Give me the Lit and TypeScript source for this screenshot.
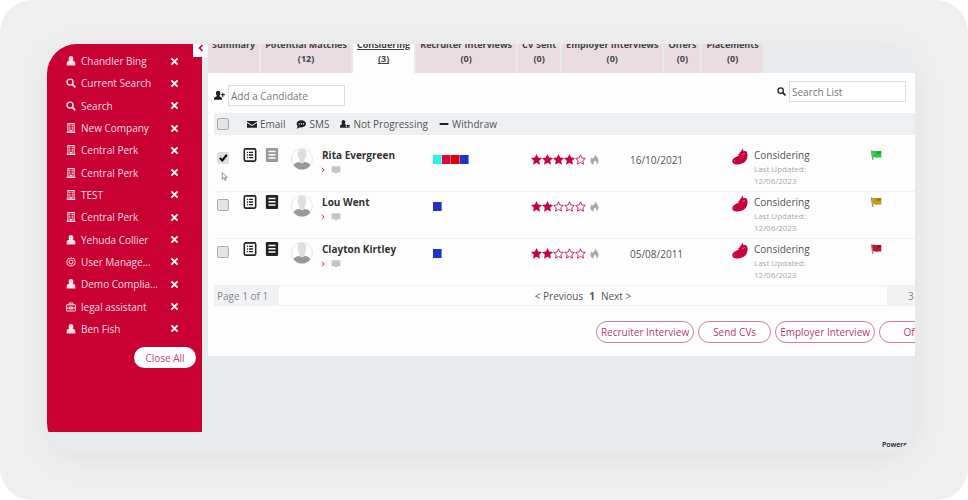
import { LitElement, html, svg, css, nothing } from "lit";
import { customElement, property } from "lit/decorators.js";

const shapes: Record<string, unknown> = {
  user: svg`<path fill="currentColor" d="M8 0c2.600 0 3.800 1.900 3.800 4.200 0 1.400-.4 2.500-1 3.300 2.700.3 4.200 1.700 4.200 4.600V15H1v-2.900c0-2.900 1.500-4.300 4.200-4.600-.6-.8-1-1.900-1-3.300C4.200 1.900 5.400 0 8 0z"/>`,
  search: svg`<g fill="none" stroke="currentColor" stroke-width="2.200"><circle cx="6.500" cy="6.500" r="4.800"/><path stroke-width="3" d="M10 10l5 5"/></g>`,
  building: svg`<g fill="none" stroke="currentColor"><path stroke-width="1.700" d="M3 15V1h10v14M1 15h14M6.500 15v-3h3v3"/><path stroke-width="1.700" d="M5 4h2m2 0h2M5 6.700h2m2 0h2M5 9.400h2m2 0h2"/></g>`,
  gear: svg`<g fill="none" stroke="currentColor" stroke-width="1.500"><path d="M8 1l2 1.500 2.600-.1.600 2.500L15 7.200 14 9.500l.2 2.500-2.500.7L10 14.600l-2-.8-2 .8-1.700-1.900-2.500-.7.2-2.500-1-2.300 1.800-2.300.6-2.500 2.600.1z"/><circle cx="8" cy="8" r="3.200"/></g>`,
  briefcase: svg`<g fill="none" stroke="currentColor" stroke-width="1.700"><rect x="1" y="4.500" width="14" height="10" rx="1.500"/><path d="M4.500 4.500l1-3h5l1 3M1 9.500h5m4 0h5M6 8h4v3H6z"/></g>`,
  userPlus: svg`<path fill="currentColor" d="M6 1c2.300 0 3.200 1.600 3.200 3.600 0 1.600-.6 2.900-1.400 3.700.1 1.500 4 1.600 4 4.200V14H0v-1.500c0-2.600 4-2.700 4.200-4.200C3.400 7.500 2.800 6.200 2.800 4.600 2.800 2.600 3.700 1 6 1zM12 4h1.600v2.200H16v1.600h-2.400V10H12V7.800H9.800V6.200H12z"/>`,
  userMinus: svg`<path fill="currentColor" d="M5.500 1.500C7.500 1.500 8.600 3 8.600 5c0 1.300-.5 2.400-1.200 3.100 1.300.4 2.300.9 2.900 1.700L9 11.200 11 13l-1 1H0v-1.600c0-2.500 1.500-3.600 3.600-4.300C2.900 7.400 2.400 6.300 2.400 5c0-2 1.100-3.500 3.100-3.500z"/><path fill="none" stroke="currentColor" stroke-width="2" d="M11 9.500l4.300 4.300m0-4.300L11 13.800"/>`,
  mail: svg`<path fill="currentColor" d="M0 3h16v1.500L8 9.500 0 4.500zM0 6.200l8 5 8-5V14H0z"/>`,
  sms: svg`<path fill="currentColor" fill-rule="evenodd" d="M8.500 2C12.700 2 16 4.500 16 7.700s-3.300 5.700-7.500 5.700c-1 0-2-.1-2.800-.4C4.500 14.200 2.800 15 1 15c.9-1 1.500-2 1.600-3.400C1.600 10.600 1 9.200 1 7.700 1 4.500 4.300 2 8.500 2zM4.300 6.800v1.800h1.800V6.800zm3.300 0v1.800h1.800V6.800zm3.300 0v1.800h1.800V6.800z"/>`,
  minus: svg`<path fill="currentColor" d="M1 6.500h14v3H1z"/>`,
  cross: svg`<path fill="none" stroke="currentColor" stroke-width="3.400" d="M2.500 2.500l11 11m0-11l-11 11"/>`,
  chevron: svg`<path fill="none" stroke="currentColor" stroke-width="3.400" d="M11 2L5 8l6 6"/>`,
  arrow: svg`<path fill="none" stroke="currentColor" stroke-width="2.200" d="M5 2l6 6-6 6"/>`,
  doc: svg`<rect x="1.500" y="1" width="13" height="14" rx="1.500" fill="none" stroke="currentColor" stroke-width="1.800"/><path fill="none" stroke="currentColor" stroke-width="1.500" d="M4.500 5h1.200m1 0h4.800M4.500 8h1.200m1 0h4.800M4.500 11h1.200m1 0h4.800"/>`,
  list: svg`<rect x="1" y="0" width="14" height="16" rx="1.500" fill="currentColor"/><path fill="none" stroke="#fff" stroke-width="1.500" d="M4 4h8M4 7.700h8M4 11.400h8"/>`,
  comment: svg`<path fill="currentColor" d="M1 2h14v9.500h-4.500L8 14l-2.500-2.500H1z"/>`,
  flame: svg`<path fill="currentColor" d="M9 0c.4 3 4.800 5 4.800 9.800 0 2.600-1.200 4.600-2.800 5.700.6-2.500-.4-4.700-2.600-6-.2 1.700-2.600 3-1.800 6C3.800 14.600 2 12.500 2 9.800 2 7.400 3.400 6 4.200 4.600c.6.9.9 1.600 1 2.600C7.400 5.700 9 3 9 0z"/>`,
  star: svg`<path fill="currentColor" d="M8 0l2.400 5.200 5.600.7-4.100 3.900 1.200 5.900L8 12.900l-5.100 2.800 1.200-5.900L0 5.900l5.600-.7z"/>`,
  starEmpty: svg`<path fill="none" stroke="currentColor" stroke-width="1.200" d="M8 1.200l2 4.600 5 .6-3.700 3.400 1.100 5L8 12.300l-4.400 2.500 1.100-5L1 6.400l5-.6z"/>`,
  bean: svg`<path fill="currentColor" d="M10 0c1 .9 1.400 1.700 1.400 2.700 1.500-.6 2.900-.3 3.500.8 1.100 2.500.8 6.300-1 8.700-2.200 2.800-6.200 4-9.900 3.700C1.500 15.700 0 14.300.3 12.300c.3-1.900 2-3.200 4-4.100 1.600-.7 2.500-1 3.200-1.600L5.800 6.400c.6-.8 1.500-1.400 2.700-1.900L7.300 4.100C9 3.400 10 2 10 0z"/><path fill="none" stroke="#fff" stroke-opacity=".5" stroke-width=".9" d="M1.800 12.800l1-.6M10.500 6c1.200-.2 1.800-.7 2.200-1.500"/>`,
  avatar: svg`<circle cx="8" cy="8" r="7.600" fill="#fff" stroke="#dcdcdc" stroke-width=".5"/><path fill="#999" d="M1.800 12.600C2.600 10.800 4.800 10 8 10s5.400.8 6.200 2.600A7.700 7.700 0 0 1 8 15.700a7.700 7.700 0 0 1-6.200-3.100z"/><path fill="#dedede" d="M8 .6c2.100 0 3.200 1.500 3.200 3.800 0 1.700-.5 3-1.300 3.800v2C9.400 11.500 6.600 11.500 6.100 10.200v-2C5.300 7.400 4.800 6.100 4.800 4.400 4.800 2.100 5.900.6 8 .6z"/>`,
  flag: svg`<path fill="#8d8d8d" d="M1 2l1.500-.5L4.500 14.500l-1.500.3z"/><path fill="currentColor" d="M2.500 2.500c3-1 5 .6 8 .3 1.500-.2 3-.2 4.500 0V11.500c-2-.5-3.500 0-5 .2-2.500.3-4-1.500-6-.6z"/><path fill="#000" fill-opacity=".2" d="M9 3c2-.3 4-.4 6-.2V6.500c-2-.4-4 .2-6 .2z"/>`,
  pointer: svg`<path fill="#fff" stroke="#777" stroke-width="1.400" d="M4 1v12l3-2.800L9 15l2-1-2-4.300h4z"/>`,
};

@customElement("ui-icon")
class UiIcon extends LitElement {
  @property() name = "";
  static styles = css`
    :host { display: inline-block; width: 10px; height: 10px; flex: none; }
    svg { display: block; width: 100%; height: 100%; }
  `;
  render() {
    return html`<svg viewBox="0 0 16 16" aria-hidden="true">${shapes[this.name]}</svg>`;
  }
}

const entries = [
  ["user", "Chandler Bing"], ["search", "Current Search"], ["search", "Search"],
  ["building", "New Company"], ["building", "Central Perk"], ["building", "Central Perk"],
  ["building", "TEST"], ["building", "Central Perk"], ["user", "Yehuda Collier"],
  ["gear", "User Manage..."], ["user", "Demo Complia..."], ["briefcase", "legal assistant"],
  ["user", "Ben Fish"],
];

const tabs: [string, number][] = [
  ["Summary", -1], ["Potential Matches", 12], ["Considering", 3], ["Recruiter Interviews", 0],
  ["CV Sent", 0], ["Employer Interviews", 0], ["Offers", 0], ["Placements", 0],
];

const people = [
  { name: "Rita Evergreen", checked: true, colours: ["cyan", "crimson", "red", "blue"], stars: 4, date: "16/10/2021", flag: "green" },
  { name: "Lou Went", checked: false, colours: ["blue"], stars: 2, date: "", flag: "gold" },
  { name: "Clayton Kirtley", checked: false, colours: ["blue"], stars: 2, date: "05/08/2011", flag: "scarlet" },
];

@customElement("app-root")
class AppRoot extends LitElement {
  static styles = css`
    :host { display: block; font: 10px/14px "Open Sans", "Noto Sans", sans-serif; color: #555; }
    * { box-sizing: border-box; }
    button, input { font: inherit; color: inherit; }
    button { background: none; border: 0; padding: 0; cursor: pointer; }
    a { color: inherit; text-decoration: none; }
    .stage { display: flex; min-height: 100vh; padding: 44px 53px 47px 47px; background: #efefef; border-radius: 32px; }
    .window { flex: 1; min-width: 0; display: flex; overflow: hidden; border-radius: 30px; background: #e7ebee; box-shadow: 0 6px 32px rgba(0, 0, 0, 0.06); }
    .side { position: relative; flex: none; width: 155px; margin-bottom: 21px; padding-top: 6px; background: #c90032; color: #fbdfe6; }
    .toggle { position: absolute; top: 0; right: -6px; width: 15px; height: 13px; padding-bottom: 6px; background: #fff; color: #c90032; }
    .toggle ui-icon { width: 8px; height: 8px; display: block; margin: 0 auto; }
    .entries { display: grid; grid-auto-rows: 1fr; min-height: 290px; margin: 0; padding: 0 23px 0 19px; list-style: none; }
    .entry { display: flex; align-items: center; }
    .entry a { display: flex; align-items: center; gap: 5px; flex: 1; white-space: nowrap; }
    .entry button { display: flex; color: #fff; }
    .entry button ui-icon { width: 9px; height: 9px; }
    .close { display: block; margin: 7px 6px 0 auto; width: 62px; height: 21px; border-radius: 11px; background: #fff; color: #c0446c; }
    .main { flex: 1; min-width: 0; margin-left: 6px; display: flex; flex-direction: column; }
    .tabs { display: flex; align-items: flex-end; gap: 2px; height: 29px; overflow: hidden; font-size: 9px; }
    .tab { padding: 0 4px 7px; text-align: center; white-space: nowrap; font-weight: 700; background: #e9dde2; color: #444; min-height: 35px; }
    .tab span { display: block; }
    .tab.on { background: #fdfdfd; text-decoration: underline; }
    .panel { margin-right: -43px; padding: 8px 6px 13px; background: #fdfdfd; }
    .tools { display: flex; align-items: flex-start; justify-content: space-between; padding-right: 46px; height: 32px; }
    .field { display: flex; align-items: center; gap: 3px; color: #222; }
    .field.add { margin-top: 4px; }
    .field ui-icon { width: 11px; height: 11px; }
    .field.find ui-icon { width: 9px; height: 9px; }
    .field input { width: 117px; height: 21px; padding: 0 2px; border: 1px solid #ddd; background: #fff; color: #777; }
    .field input::placeholder { color: #777; opacity: 1; }
    table { width: 100%; border-collapse: collapse; table-layout: fixed; }
    td, th { padding: 0; text-align: left; vertical-align: top; font-weight: 400; }
    thead th { height: 22px; background: #edf0f2; vertical-align: middle; }
    .bar { display: flex; align-items: center; gap: 11px; padding-left: 3px; }
    .bar button { display: flex; align-items: center; gap: 3px; }
    .bar ui-icon { color: #222; }
    .gap td { height: 10px; }
    .row td { height: 47px; padding-top: 3px; box-shadow: inset 0 -1px #f1f1f1; }
    .check { appearance: none; display: block; width: 12px; height: 12px; margin: 0 0 0 3px; border: 1px solid #aaa; border-radius: 2px; background: #e4e4e4; }
    .row .check { margin-top: 4px; }
    .check:checked { border-color: #ddd; background: #ddd url('data:image/svg+xml,<svg xmlns="http://www.w3.org/2000/svg" viewBox="0 0 16 16"><path d="M3 8l4 4 7-9" fill="none" stroke="black" stroke-width="3.400"/></svg>'); }
    .pick { position: relative; }
    .pointer { position: absolute; left: 6px; top: 27px; width: 9px; height: 9px; }
    .sheet { display: block; width: 14px; height: 14px; color: #222; margin-left: -1px; }
    .sheet.dim { color: #999; }
    .face { display: block; width: 22px; height: 22px; }
    .name { display: block; font-weight: 700; color: #333; }
    .notes { display: flex; align-items: center; gap: 5px; margin-top: 3px; color: #c4c4c4; }
    .notes ui-icon:first-child { width: 6px; height: 6px; margin-left: -2px; color: #c90032; }
    .chips { display: flex; padding-top: 7px; }
    .chip { width: 9px; height: 9px; border-right: 1px solid #fdfdfd66; }
    .cyan { background: #27f3e6; } .crimson { background: #e0063c; } .red { background: #dd0010; } .blue { background: #2233cc; }
    .stars { display: flex; align-items: center; padding-top: 6px; color: #c8003c; }
    .stars ui-icon { width: 11px; height: 11px; }
    .stars .flame { margin-left: 3px; color: #aaa; }
    .date { display: block; padding-top: 5px; }
    .bean { display: block; width: 16px; height: 17px; color: #c8003c; }
    .state { display: block; line-height: 15px; }
    .small { display: block; font-size: 8px; line-height: 12px; color: #aaa; }
    .flag { display: block; width: 12px; height: 12px; margin-top: 1px; }
    .green { color: #22cc44; } .gold { color: #c79a10; } .scarlet { color: #c4122c; }
    .pager { display: flex; justify-content: space-between; align-items: center; height: 20px; border-bottom: 1px solid #f1f1f1; }
    .box { width: 65px; height: 20px; line-height: 20px; padding-left: 3px; background: #f0f2f3; color: #888; }
    .box.total { padding-left: 21px; }
    .pages { display: flex; gap: 6px; }
    .moves { display: flex; justify-content: flex-end; gap: 4px; margin-top: 15px; }
    .moves button { min-width: 73px; height: 22px; padding: 0 4px; border: 1px solid #cf7d99; border-radius: 11px; color: #b93a66; background: #fff; }
    .foot { margin: auto 0 0 auto; width: 33px; padding-bottom: 2px; font-size: 7px; line-height: 12px; font-weight: 600; color: #112; white-space: nowrap; }
  `;

  row(p: (typeof people)[number]) {
    return html`<tr class="row">
      <td class="pick"><input class="check" type="checkbox" aria-label=${p.name} .checked=${p.checked} />
        ${p.checked ? html`<ui-icon class="pointer" name="pointer"></ui-icon>` : nothing}</td>
      <td><ui-icon class="sheet" name="doc"></ui-icon></td>
      <td><ui-icon class="sheet ${p.checked ? "dim" : ""}" name="list"></ui-icon></td>
      <td><ui-icon class="face" name="avatar"></ui-icon></td>
      <td><a class="name" href="#">${p.name}</a>
        <span class="notes"><ui-icon name="arrow"></ui-icon><ui-icon name="comment"></ui-icon></span></td>
      <td><div class="chips">${p.colours.map((c) => html`<span class="chip ${c}"></span>`)}</div></td>
      <td><div class="stars">${[0, 1, 2, 3, 4].map((i) => html`<ui-icon name=${i < p.stars ? "star" : "starEmpty"}></ui-icon>`)}<ui-icon class="flame" name="flame"></ui-icon></div></td>
      <td><span class="date">${p.date}</span></td>
      <td><ui-icon class="bean" name="bean"></ui-icon></td>
      <td><span class="state">Considering</span><span class="small">Last Updated:</span><span class="small">12/06/2023</span></td>
      <td><ui-icon class="flag ${p.flag}" name="flag"></ui-icon></td>
    </tr>`;
  }

  render() {
    return html`<div class="stage"><div class="window">
      <nav class="side">
        <button class="toggle" aria-label="Collapse"><ui-icon name="chevron"></ui-icon></button>
        <ul class="entries">${entries.map(([icon, label]) => html`<li class="entry">
          <a href="#"><ui-icon name=${icon}></ui-icon>${label}</a>
          <button aria-label="Close"><ui-icon name="cross"></ui-icon></button></li>`)}</ul>
        <button class="close">Close All</button>
      </nav>
      <main class="main">
        <nav class="tabs">${tabs.map(([t, n]) => html`<a href="#" class="tab ${t === "Considering" ? "on" : ""}">
          <span>${t}</span>${n < 0 ? nothing : html`<span>(${n})</span>`}</a>`)}</nav>
        <section class="panel">
          <div class="tools">
            <label class="field add"><ui-icon name="userPlus"></ui-icon><input aria-label="Add a Candidate" placeholder="Add a Candidate" /></label>
            <label class="field find"><ui-icon name="search"></ui-icon><input aria-label="Search List" placeholder="Search List" /></label>
          </div>
          <table>
            <colgroup>${[30, 22, 25, 31, 111, 98, 99, 102, 22, 116].map((w) => html`<col width=${w} />`)}<col /></colgroup>
            <thead><tr><th><input class="check" type="checkbox" aria-label="Select all" /></th>
              <th colspan="10"><div class="bar">
                <button><ui-icon name="mail"></ui-icon>Email</button>
                <button><ui-icon name="sms"></ui-icon>SMS</button>
                <button><ui-icon name="userMinus"></ui-icon>Not Progressing</button>
                <button><ui-icon name="minus"></ui-icon>Withdraw</button>
              </div></th></tr></thead>
            <tbody><tr class="gap"><td colspan="11"></td></tr>${people.map((p) => this.row(p))}</tbody>
          </table>
          <div class="pager"><span class="box">Page 1 of 1</span>
            <span class="pages"><a href="#">&lt; Previous</a><b>1</b><a href="#">Next &gt;</a></span>
            <span class="box total">3</span></div>
          <div class="moves"><button>Recruiter Interview</button><button>Send CVs</button><button>Employer Interview</button><button>Offer</button></div>
        </section>
        <footer class="foot">Powered by</footer>
      </main>
    </div></div>`;
  }
}
